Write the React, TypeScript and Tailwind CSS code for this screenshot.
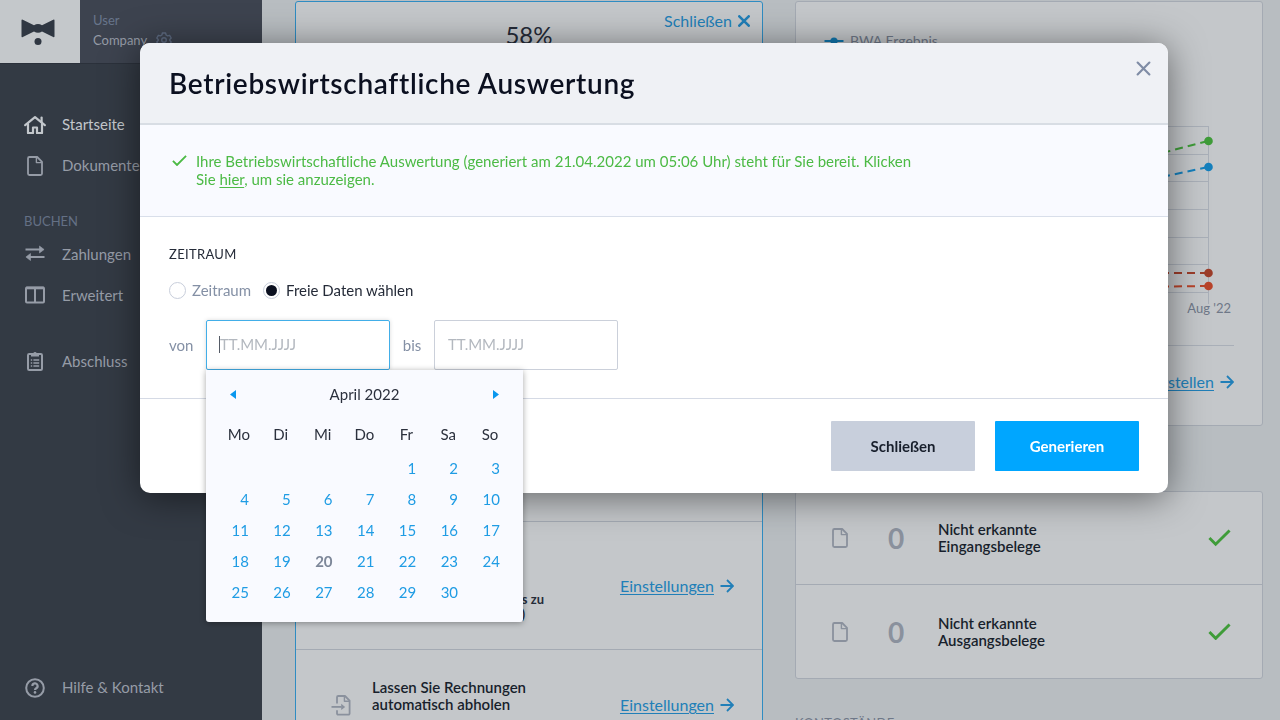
import { useState } from 'react'
import type { ReactNode } from 'react'

type IconProps = { className?: string }

function BowTieLogo() {
  return (
    <svg width="34" height="28" viewBox="0 0 34 28" fill="#2f3742" aria-label="Logo">
      <path d="M0.5 1.4Q0.5 0 1.8 0.7L13 6.2Q17 3.6 21 6.2L32.2 0.7Q33.5 0 33.5 1.4V17.2Q33.5 18.6 32.2 17.9L21 12.6Q17 15 13 12.6L1.8 17.9Q0.5 18.6 0.5 17.2Z" />
      <circle cx="17" cy="22.6" r="3.5" />
    </svg>
  )
}

function HomeIcon() {
  return (
    <svg width="22" height="18" viewBox="0 0 22 18" fill="none" stroke="currentColor" strokeWidth="2.2" strokeLinecap="round" strokeLinejoin="round">
      <path d="M1.2 9.2 11 1.2l9.8 8" />
      <path d="M4 8v9h5v-5.5h4V17h5V8" />
      <path d="M17.6 1.6v4.6" />
    </svg>
  )
}

function FileIcon({ className }: IconProps) {
  return (
    <svg className={className} width="16" height="20" viewBox="0 0 16 20" fill="none" stroke="currentColor" strokeWidth="1.8" strokeLinejoin="round">
      <path d="M2.4 1h7.8L15 5.8v11.8a1.4 1.4 0 0 1-1.4 1.4H2.4A1.4 1.4 0 0 1 1 17.6V2.4A1.4 1.4 0 0 1 2.4 1Z" />
      <path d="M9.4 1.2v5.4h5.4" strokeWidth="1.4" />
    </svg>
  )
}

function TransferIcon() {
  return (
    <svg width="20" height="20" viewBox="0 0 20 20" fill="currentColor" stroke="currentColor">
      <path d="M0.5 4.5H15M5 12h14.5" fill="none" strokeWidth="2" />
      <path d="M14.5 1v7l4.6-3.5ZM5.5 8.5v7L0.9 12Z" strokeWidth="0.6" strokeLinejoin="round" />
    </svg>
  )
}

function ColumnsIcon() {
  return (
    <svg width="20" height="20" viewBox="0 0 20 20" fill="none" stroke="currentColor" strokeWidth="2">
      <rect x="1" y="1.4" width="18" height="15.2" rx="1" />
      <path d="M1 2h18" strokeWidth="2.6" />
      <path d="M10 2v14" />
    </svg>
  )
}

function ClipboardIcon() {
  return (
    <svg width="16" height="22" viewBox="0 0 16 22" fill="none" stroke="currentColor" strokeWidth="2">
      <rect x="1" y="3" width="14" height="16" rx="1.2" />
      <path d="M4 2.4h2.2a1.9 1.9 0 0 1 3.6 0H12v3.2H4Z" fill="currentColor" stroke="none" />
      <path d="M3.8 9h1.4M6.4 9h5.8M3.8 12h1.4M6.4 12h5.8M3.8 15h1.4M6.4 15h5.8" strokeWidth="1.3" />
    </svg>
  )
}

function HelpIcon() {
  return (
    <svg width="20" height="20" viewBox="0 0 20 20" fill="none" stroke="currentColor">
      <circle cx="10" cy="10" r="8.8" strokeWidth="2" />
      <path d="M7.4 8a2.6 2.6 0 1 1 3.8 2.2c-.8.5-1.2.8-1.2 1.8" strokeWidth="2.2" />
      <circle cx="10" cy="14.4" r="1.3" fill="currentColor" stroke="none" />
    </svg>
  )
}

function GearIcon() {
  return (
    <svg width="16" height="16" viewBox="0 0 16 16" fill="none" stroke="currentColor" strokeWidth="1.4" strokeLinejoin="round">
      <path d="M6.4 1h3.2l.5 2 1.5.9 2-.6 1.6 2.7L13.8 7.4v1.2l1.4 1.4-1.6 2.7-2-.6-1.5.9-.5 2H6.4l-.5-2-1.5-.9-2 .6L.8 10l1.4-1.4V7.4L.8 6l1.6-2.7 2 .6L5.9 3Z" />
      <circle cx="8" cy="8" r="2.3" />
    </svg>
  )
}

function FileImportIcon() {
  return (
    <svg width="20" height="21" viewBox="0 0 20 21" fill="none" stroke="currentColor" strokeWidth="1.8" strokeLinejoin="round">
      <path d="M6 8.5V2.2A1.2 1.2 0 0 1 7.2 1H14l4.6 4.6v12.8a1.2 1.2 0 0 1-1.2 1.2H7.2A1.2 1.2 0 0 1 6 18.4v-3.2" />
      <path d="M13.4 1.2v5h5" strokeWidth="1.4" />
      <path d="M0.5 11.9h10" />
      <path d="M10.2 8.8v6.2l4-3.1Z" fill="currentColor" stroke="none" />
    </svg>
  )
}

function ArrowIcon() {
  return (
    <svg width="14" height="14" viewBox="0 0 14 14" fill="none" stroke="currentColor" strokeWidth="1.8">
      <path d="M0.5 7h12M7 1l6 6-6 6" />
    </svg>
  )
}

function CheckIcon({ className }: IconProps) {
  return (
    <svg className={className} viewBox="0 0 24 18" fill="none" stroke="currentColor" strokeWidth="3">
      <path d="M1.5 9.5 8 16 22.5 1.5" />
    </svg>
  )
}

function CrossIcon({ className }: IconProps) {
  return (
    <svg className={className} viewBox="0 0 14 14" fill="none" stroke="currentColor" strokeLinecap="round">
      <path d="M1.5 1.5l11 11M12.5 1.5l-11 11" />
    </svg>
  )
}

function NavItem({ icon, label, active }: { icon: ReactNode; label: string; active?: boolean }) {
  return (
    <a href="#" className={active ? 'flex h-[41px] items-center text-[#c3c7cc]' : 'flex h-[41px] items-center text-[#969ca7]'}>
      <span className="mr-4 flex w-[22px] justify-center">{icon}</span>
      {label}
    </a>
  )
}

function Sidebar() {
  return (
    <aside className="flex w-[262px] shrink-0 flex-col bg-[#333a44]">
      <div className="flex h-16 border-b border-[#2b313b] bg-[#3d434f]">
        <div className="flex w-20 items-center justify-center bg-[#c4c8cb] pt-0.5 pr-1">
          <BowTieLogo />
        </div>
        <div className="pt-[10px] pl-[13px] text-[13px] leading-5">
          <div className="text-[#68758b]">User</div>
          <div className="flex items-center gap-[9px] text-[#959ba6]">
            Company
            <span className="text-[#5d6a80]"><GearIcon /></span>
          </div>
        </div>
      </div>
      <nav className="flex flex-1 flex-col px-6 pt-10 text-[15px]">
        <NavItem icon={<HomeIcon />} label="Startseite" active />
        <NavItem icon={<FileIcon />} label="Dokumente" />
        <h2 className="mt-[27px] mb-[5px] text-[13px] leading-4 text-[#647085]">BUCHEN</h2>
        <NavItem icon={<TransferIcon />} label="Zahlungen" />
        <NavItem icon={<ColumnsIcon />} label="Erweitert" />
        <div className="h-[25px]" />
        <NavItem icon={<ClipboardIcon />} label="Abschluss" />
        <div className="mt-auto mb-3">
          <NavItem icon={<HelpIcon />} label="Hilfe & Kontakt" />
        </div>
      </nav>
    </aside>
  )
}

function ArrowLink({ label }: { label: string }) {
  return (
    <a href="#" className="flex items-center gap-[6px] leading-5 text-[#217fb8]">
      <span className="underline underline-offset-2">{label}</span>
      <ArrowIcon />
    </a>
  )
}

function SetupCard() {
  return (
    <section className="h-[760px] rounded-t-[3px] border border-[#2f8cc2] bg-[#c4c7ca]">
      <div className="h-[520px] border-b border-[#a4aab3] px-3 pt-[9px]">
        <div className="flex justify-end">
          <button className="flex items-center gap-[6px] leading-5 text-[#217fb8]">
            Schließen
            <CrossIcon className="size-3 stroke-[3]" />
          </button>
        </div>
        <p className="-mt-2.5 text-center text-2xl leading-7 text-[#252b38]">58%</p>
      </div>
      <div className="flex h-32 items-center border-b border-[#a4aab3] pr-7 pl-[76px]">
        <p className="mt-[42px] w-[172px] text-right text-[13px] leading-[15px] font-bold text-[#252b38]">
          <span className="block">s zu</span>
          <span className="block pr-[19px]">)</span>
        </p>
        <div className="ml-auto"><ArrowLink label="Einstellungen" /></div>
      </div>
      <div className="flex h-[110px] items-center pr-7 pl-[35px]">
        <span className="w-[41px] text-[#8a919d]"><FileImportIcon /></span>
        <p className="mb-[18px] text-[15px] leading-[17px] font-semibold text-[#181f2c]">
          Lassen Sie Rechnungen
          <br />
          automatisch abholen
        </p>
        <div className="ml-auto"><ArrowLink label="Einstellungen" /></div>
      </div>
    </section>
  )
}

const gridLines = [0, 28, 55, 83, 111, 138, 166]

function ResultChart() {
  return (
    <svg className="ml-auto block" width="380" height="178" viewBox="0 0 380 178" fill="none">
      {gridLines.map((y) => (
        <path key={y} d={`M0 ${y + 0.5}H380`} stroke="#a9afb8" />
      ))}
      <path d="M379.5 0V178" stroke="#a9afb8" />
      <g strokeWidth="2" strokeDasharray="8 5">
        <path d="M379 15 310 33" stroke="#3f9c39" />
        <path d="M379 41 310 56" stroke="#1580bd" />
        <path d="M379 147H300" stroke="#9c3d2a" />
        <path d="M379 160 300 161" stroke="#b8432a" />
      </g>
    </svg>
  )
}

function ChartPoints() {
  return (
    <svg className="absolute top-0 -right-1" width="9" height="178" viewBox="0 0 9 178">
      <circle cx="4.5" cy="15" r="4.3" fill="#3f9c39" />
      <circle cx="4.5" cy="41" r="4.3" fill="#1580bd" />
      <circle cx="4.5" cy="147" r="4.3" fill="#9c3d2a" />
      <circle cx="4.5" cy="160" r="4.3" fill="#b8432a" />
    </svg>
  )
}

function ResultCard() {
  return (
    <section className="h-[425px] rounded-[3px] border border-[#a4aab3] bg-[#c4c7ca] px-7">
      <div className="flex items-center gap-[6px] pt-[29px] text-sm leading-5 text-[#6f7888]">
        <svg width="20" height="8" viewBox="0 0 20 8">
          <path d="M0.5 4h19" stroke="#1278b0" strokeWidth="2" />
          <circle cx="10" cy="4" r="3.6" fill="#1278b0" />
        </svg>
        BWA Ergebnis
      </div>
      <div className="relative mt-[75px] mr-[25px]">
        <ResultChart />
        <ChartPoints />
      </div>
      <p className="-mt-1 mr-[3px] text-right text-[13px] leading-4 text-[#6f7888]">Aug '22</p>
      <div className="mt-[29px] flex justify-end border-t border-[#a9afb8] pt-[26px]">
        <ArrowLink label="BWA erstellen" />
      </div>
    </section>
  )
}

function CountRow({ label, kind }: { label: string; kind: string }) {
  return (
    <div className="flex h-[93px] items-center pr-[31px] pl-9">
      <FileIcon className="w-4 text-[#8a919d]" />
      <span className="ml-10 w-[50px] text-[28px] leading-8 font-bold text-[#8a919d]">{0}</span>
      <p className="text-[15px] leading-[17px] font-semibold text-[#181f2c]">
        {label}
        <br />
        {kind}
      </p>
      <CheckIcon className="ml-auto w-[23px] text-[#3f9c39]" />
    </div>
  )
}

const weekdays = ['Mo', 'Di', 'Mi', 'Do', 'Fr', 'Sa', 'So']
const weeks = [
  [0, 0, 0, 0, 1, 2, 3],
  [4, 5, 6, 7, 8, 9, 10],
  [11, 12, 13, 14, 15, 16, 17],
  [18, 19, 20, 21, 22, 23, 24],
  [25, 26, 27, 28, 29, 30, 0],
]

function Calendar({ onPick }: { onPick: (date: string) => void }) {
  return (
    <div className="absolute top-full left-0 z-10 w-[317px] rounded-b-[3px] bg-[#f9faff] px-3 pt-[11px] pb-[14px] shadow-[0_1px_6px_rgba(0,0,0,0.35)]">
      <div className="flex items-center justify-between px-3 leading-[26px] text-[#2b303d]">
        <button aria-label="Vorheriger Monat" className="flex h-6 w-2 items-center">
          <svg width="6" height="9" viewBox="0 0 6 9" fill="#0a97ee"><path d="M6 0v9L0 4.5Z" /></svg>
        </button>
        April 2022
        <button aria-label="Nächster Monat" className="flex h-6 w-2 items-center justify-end">
          <svg width="6" height="9" viewBox="0 0 6 9" fill="#0a97ee"><path d="M0 0v9l6-4.5Z" /></svg>
        </button>
      </div>
      <table className="mt-2 w-full table-fixed">
        <thead>
          <tr className="h-[38px] text-[#2b303d]">
            {weekdays.map((day) => (
              <th key={day} className="p-0 text-center font-normal">{day}</th>
            ))}
          </tr>
        </thead>
        <tbody>
          {weeks.map((week) => (
            <tr key={week[1]} className="h-[31px] text-right text-[#1f9ce4]">
              {week.map((day, i) => (
                <td key={i} className="p-0 pr-[11px]">
                  {day > 0 && (
                    <button
                      onClick={() => onPick(`${String(day).padStart(2, '0')}.04.2022`)}
                      className={day === 20 ? 'font-bold text-[#7d8799]' : ''}
                    >
                      {day}
                    </button>
                  )}
                </td>
              ))}
            </tr>
          ))}
        </tbody>
      </table>
    </div>
  )
}

const radioClass =
  'mr-[6px] flex size-[17px] appearance-none items-center justify-center rounded-full border border-[#c8cedb] bg-white checked:before:size-[11px] checked:before:rounded-full checked:before:bg-[#0b1020]'

function ReportDialog() {
  const [mode, setMode] = useState('free')
  const [from, setFrom] = useState('')
  const [to, setTo] = useState('')

  return (
    <div role="dialog" aria-labelledby="dialog-title" className="w-full max-w-[1028px] rounded-[10px] bg-white shadow-[0_4px_36px_rgba(0,0,0,0.5)]">
      <header className="flex h-[82px] justify-between rounded-t-[10px] border-b-2 border-[#d8dde4] bg-[#eff1f5] px-[29px]">
        <h1 id="dialog-title" className="self-center text-[28px] leading-9 font-semibold tracking-wide text-[#0b1020]">
          Betriebswirtschaftliche Auswertung
        </h1>
        <button aria-label="Dialog schließen" className="mt-3 -mr-[17px] flex size-[26px] items-center justify-center self-start text-[#7f8ca5]">
          <CrossIcon className="size-[15px] stroke-2" />
        </button>
      </header>

      <div className="flex h-[92px] items-start gap-[9px] border-b border-[#d9dfea] bg-[#f9faff] pt-[27px] pl-8 text-[15px] leading-[18px] text-[#4cba45]">
        <CheckIcon className="mt-[3px] w-[15px] shrink-0" />
        <p className="max-w-[735px]">
          Ihre Betriebswirtschaftliche Auswertung (generiert am 21.04.2022 um 05:06 Uhr) steht für Sie bereit. Klicken Sie{' '}
          <a href="#" className="underline underline-offset-2">hier</a>, um sie anzuzeigen.
        </p>
      </div>

      <fieldset className="h-[182px] border-b border-[#d5dae5] px-[29px] pt-[28px] text-[15px] text-[#8490a5]">
        <legend className="float-left w-full text-[13px] leading-[18px] tracking-wide text-[#252b38]">ZEITRAUM</legend>
        <div className="clear-both flex gap-3 pt-[17px] leading-5">
          <label className="flex items-center">
            <input type="radio" name="mode" className={radioClass} checked={mode === 'period'} onChange={() => setMode('period')} />
            Zeitraum
          </label>
          <label className="flex items-center text-[#252b38]">
            <input type="radio" name="mode" className={radioClass} checked={mode === 'free'} onChange={() => setMode('free')} />
            Freie Daten wählen
          </label>
        </div>
        <div className="mt-5 flex items-center">
          <label htmlFor="from" className="w-[37px]">von</label>
          <div className="relative">
            <input
              id="from"
              value={from}
              onChange={(e) => setFrom(e.target.value)}
              placeholder="TT.MM.JJJJ"
              className="block h-[50px] w-[184px] rounded-[2px] border border-[#42aee8] px-[13px] pb-0.5 text-[#252b38] caret-transparent shadow-[0_0_4px_rgba(0,0,0,0.15)] outline-none placeholder:text-[#b3b8bf]"
            />
            {/* text cursor */}
            <span className="absolute top-4 left-[13px] h-[17px] w-px bg-[#555b66]" />
            <Calendar onPick={setFrom} />
          </div>
          <label htmlFor="to" className="w-11 text-center">bis</label>
          <input
            id="to"
            value={to}
            onChange={(e) => setTo(e.target.value)}
            placeholder="TT.MM.JJJJ"
            className="block h-[50px] w-[184px] rounded-[2px] border border-[#cbd0da] px-[13px] pb-0.5 text-[#252b38] outline-none placeholder:text-[#b3b8bf]"
          />
        </div>
      </fieldset>

      <footer className="flex h-[94px] items-center justify-end gap-5 px-[29px] text-[15px] font-bold">
        <button className="h-[50px] w-36 rounded-[1px] bg-[#c8cfdc] text-[#181f2c]">Schließen</button>
        <button className="h-[50px] w-36 rounded-[1px] bg-[#00a6ff] text-white">Generieren</button>
      </footer>
    </div>
  )
}

export default function App() {
  return (
    <div className="flex h-screen overflow-hidden bg-[#b8bdc1] font-['Lato',sans-serif]">
      <Sidebar />
      <main className="grid flex-1 grid-cols-2 items-start gap-8 pt-px pr-[17px] pl-[33px]">
        <SetupCard />
        <div>
          <ResultCard />
          <section className="mt-[65px] divide-y divide-[#a4aab3] rounded-[3px] border border-[#a4aab3] bg-[#c4c7ca]">
            <CountRow label="Nicht erkannte" kind="Eingangsbelege" />
            <CountRow label="Nicht erkannte" kind="Ausgangsbelege" />
          </section>
          <h2 className="mt-[34px] text-[13px] leading-5 tracking-wide text-[#6f7888]">KONTOSTÄNDE</h2>
        </div>
      </main>
      <div className="fixed inset-0 flex items-start justify-center pt-[43px] pl-7">
        <ReportDialog />
      </div>
    </div>
  )
}
